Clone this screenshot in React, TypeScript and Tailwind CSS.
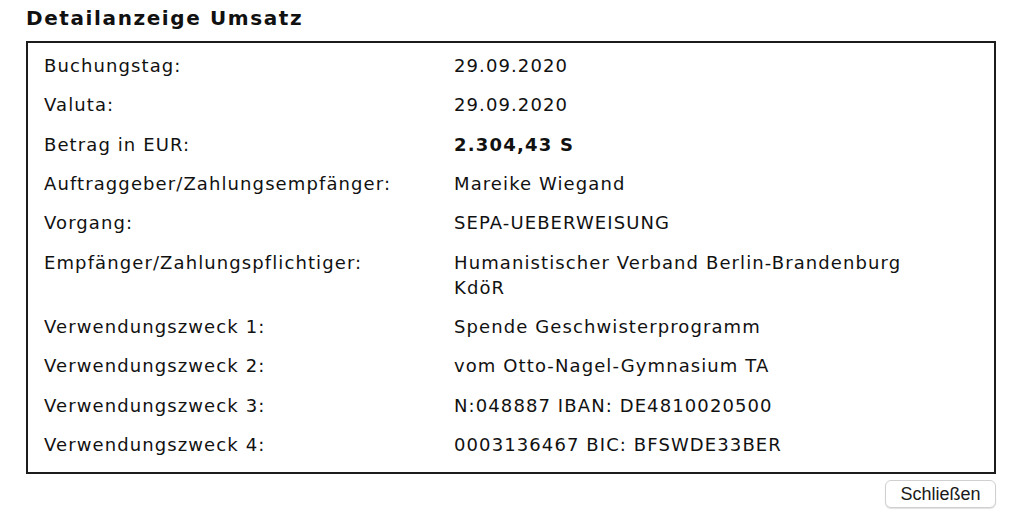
const rows: { label: string; value: string[]; bold?: boolean }[] = [
  { label: "Buchungstag:", value: ["29.09.2020"] },
  { label: "Valuta:", value: ["29.09.2020"] },
  { label: "Betrag in EUR:", value: ["2.304,43 S"], bold: true },
  { label: "Auftraggeber/Zahlungsempfänger:", value: ["Mareike Wiegand"] },
  { label: "Vorgang:", value: ["SEPA-UEBERWEISUNG"] },
  {
    label: "Empfänger/Zahlungspflichtiger:",
    value: ["Humanistischer Verband Berlin-Brandenburg", "KdöR"],
  },
  { label: "Verwendungszweck 1:", value: ["Spende Geschwisterprogramm"] },
  { label: "Verwendungszweck 2:", value: ["vom Otto-Nagel-Gymnasium TA"] },
  { label: "Verwendungszweck 3:", value: ["N:048887 IBAN: DE4810020500"] },
  { label: "Verwendungszweck 4:", value: ["0003136467 BIC: BFSWDE33BER"] },
];

export default function App() {
  return (
    <div className="min-h-[512px] w-[1024px] bg-white font-['DejaVu_Sans',sans-serif] text-[#111]">
      <div className="w-[970px] ml-[26px] pt-[6px]">
        {/* Heading */}
        <h1 className="text-[20px] font-bold leading-[24px] tracking-[1.6px]">Detailanzeige Umsatz</h1>

        {/* Detail box */}
        <div className="mt-[11px] border-2 border-[#1c1c1c] pl-[16px] pt-[3px] pb-[8px]">
          {rows.map((r) => (
            <div key={r.label} className="flex py-[7.17px] text-[18px] leading-[25px] tracking-[1.1px]">
              <div className="w-[410px] shrink-0">{r.label}</div>
              <div className={r.bold ? "font-bold tracking-[1.2px]" : ""}>
                {r.value.map((v) => (
                  <div key={v}>{v}</div>
                ))}
              </div>
            </div>
          ))}
        </div>

        {/* Close button */}
        <div className="flex justify-end mt-[6px]">
          <button className="w-[111px] h-[28px] rounded-[6px] border border-[#d0d0d0] bg-white shadow-[0_1px_1px_rgba(0,0,0,0.12)] font-['Liberation_Sans',sans-serif] text-[18px] leading-none text-[#1a1a1a]">
            Schließen
          </button>
        </div>
      </div>
    </div>
  );
}
